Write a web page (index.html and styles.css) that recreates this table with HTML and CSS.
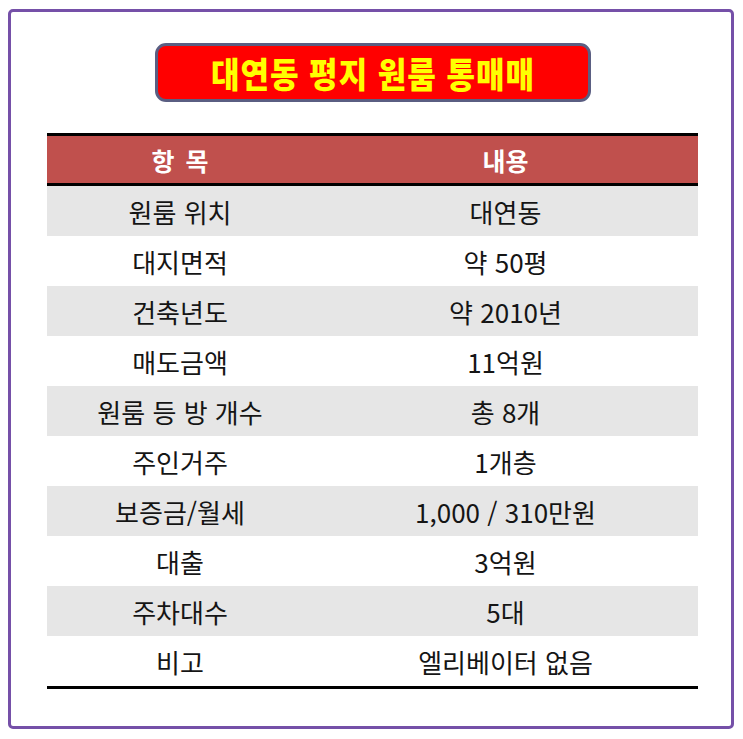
FILE: index.html
```html
<!DOCTYPE html>
<html lang="ko">
<head>
<meta charset="utf-8">
<link rel="stylesheet" href="styles.css">
</head>
<body>
<div class="frame">
  <div class="title"><span>대연동 평지 원룸 통매매</span></div>
  <table class="info">
    <thead>
      <tr><th class="c1">항 목</th><th class="c2">내용</th></tr>
    </thead>
    <tbody>
      <tr class="g"><td>원룸 위치</td><td>대연동</td></tr>
      <tr><td>대지면적</td><td>약 50평</td></tr>
      <tr class="g"><td>건축년도</td><td>약 2010년</td></tr>
      <tr><td>매도금액</td><td>11억원</td></tr>
      <tr class="g"><td>원룸 등 방 개수</td><td>총 8개</td></tr>
      <tr><td>주인거주</td><td>1개층</td></tr>
      <tr class="g"><td>보증금/월세</td><td>1,000 / 310만원</td></tr>
      <tr><td>대출</td><td>3억원</td></tr>
      <tr class="g"><td>주차대수</td><td>5대</td></tr>
      <tr><td>비고</td><td>엘리베이터 없음</td></tr>
    </tbody>
  </table>
</div>
</body>
</html>
```
FILE: styles.css
```css
html, body {
  margin: 0;
  padding: 0;
  background: #ffffff;
}
body {
  font-family: "Noto Sans CJK KR", "Noto Sans", sans-serif;
}
.frame {
  box-sizing: border-box;
  margin: 9px 0 0 8px;
  width: 726px;
  height: 720px;
  border: 3px solid #7550a8;
  border-radius: 5px;
  padding: 31px 0 0 36px;
}
.title {
  box-sizing: border-box;
  margin-left: 108px;
  width: 436px;
  height: 59px;
  background: #ff0000;
  border: 3px solid #5a5e82;
  border-radius: 11px;
  display: flex;
  align-items: center;
  justify-content: center;
}
.title span {
  color: #ffff00;
  font-weight: 900;
  font-size: 31px;
  letter-spacing: 1px;
  line-height: 1;
  transform: scaleY(1.12);
}
.info {
  margin-top: 31px;
  width: 651px;
  border-collapse: collapse;
  border-top: 3px solid #000;
  border-bottom: 3px solid #000;
}
.info th {
  background: #c0504d;
  color: #ffffff;
  font-weight: 700;
  font-size: 25px;
  word-spacing: 4px;
  height: 47px;
  padding: 0;
  border-bottom: 3px solid #000;
}
.info th.c1 { width: 266px; }
.info td {
  height: 50px;
  padding: 0;
  text-align: center;
  font-size: 26px;
  color: #151515;
  font-weight: 400;
}
.info tr.g td {
  background: #e6e6e6;
}
```
